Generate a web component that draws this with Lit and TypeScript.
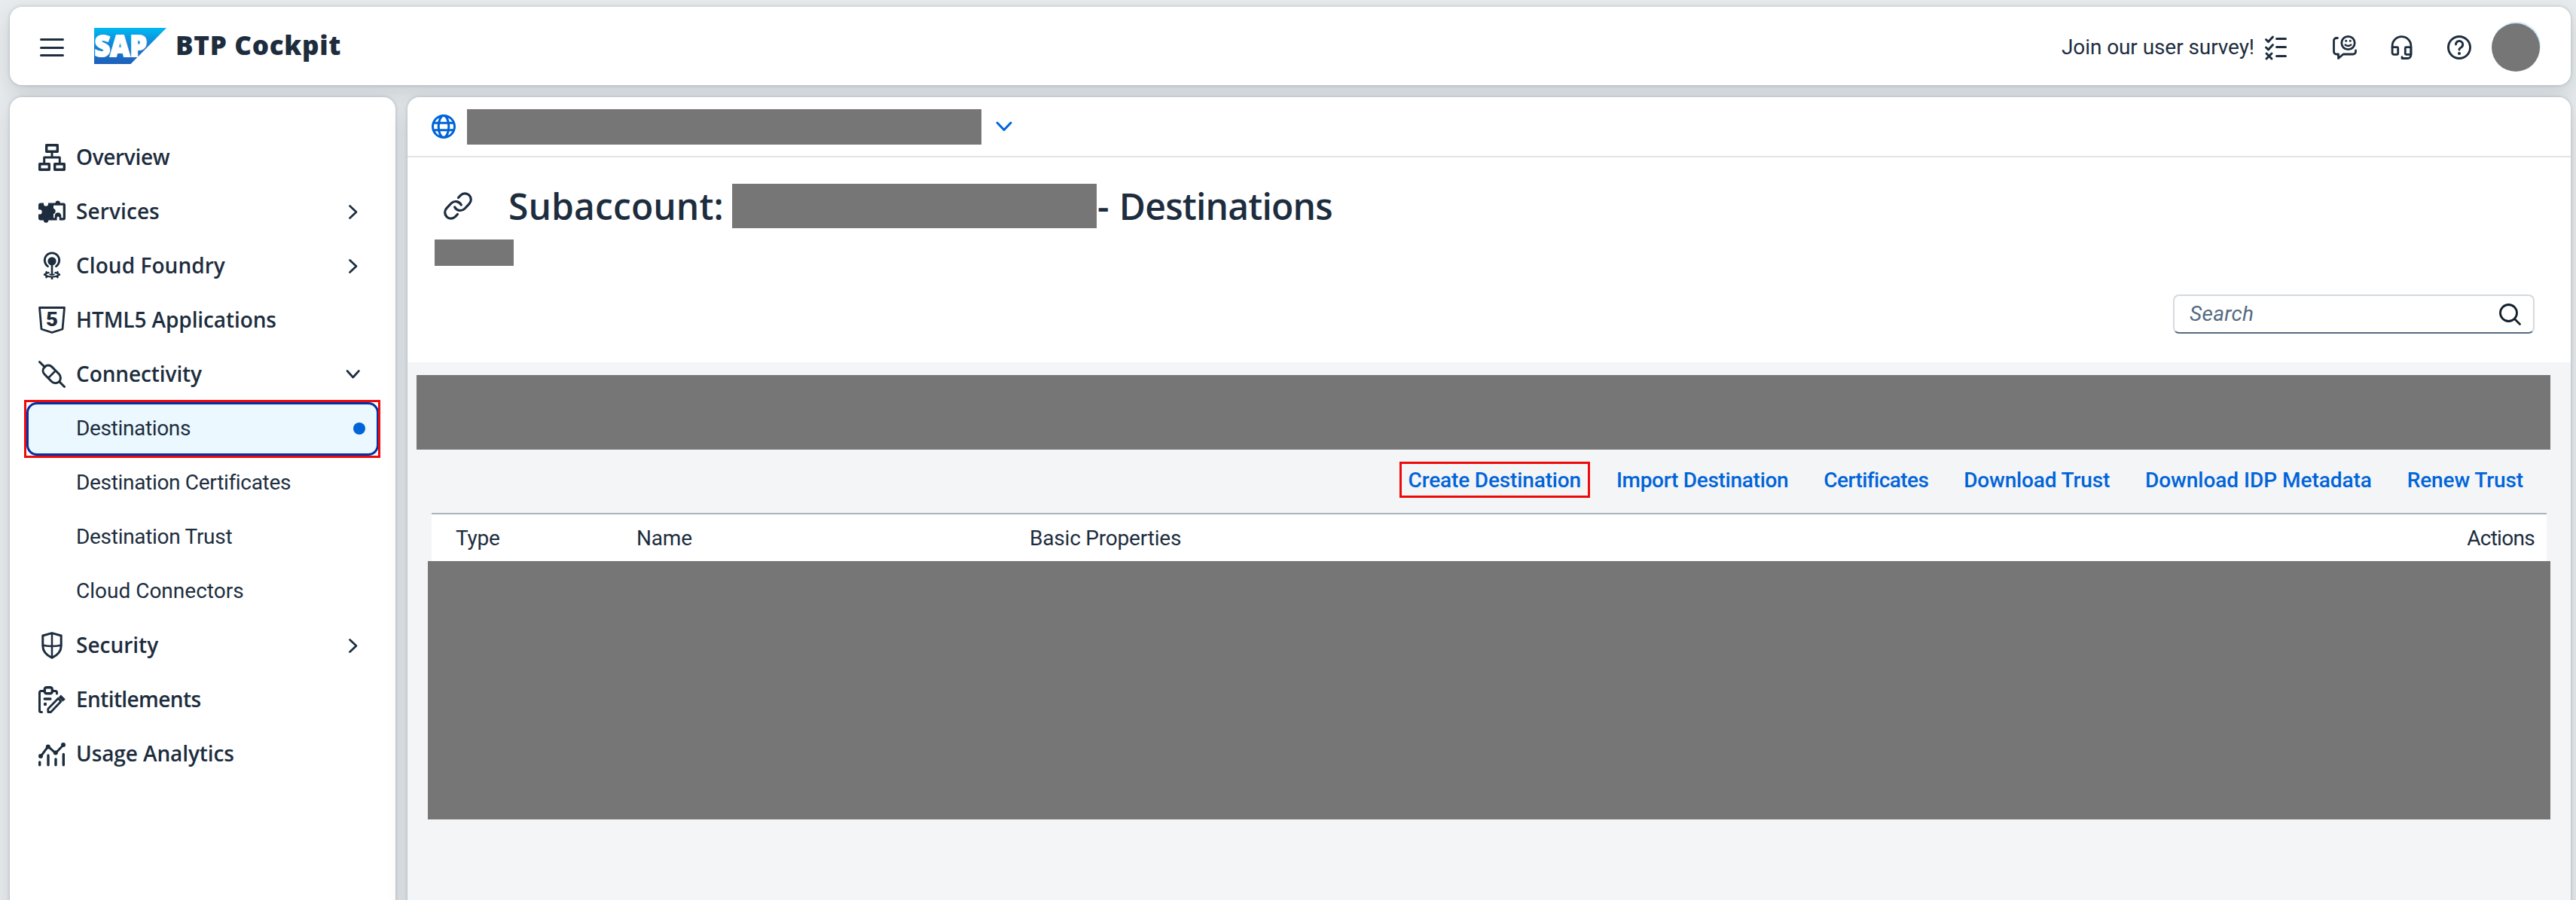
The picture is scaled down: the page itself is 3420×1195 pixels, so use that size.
import { LitElement, html, svg, css, nothing } from "lit";
import { customElement } from "lit/decorators.js";
import { classMap } from "lit/directives/class-map.js";
import { styleMap } from "lit/directives/style-map.js";

type NavItem = {
  label: string;
  icon?: keyof typeof navIcons;
  arrow?: "right" | "down";
  selected?: boolean;
  tracking: number;
};

/* Navigation icons, each on a 36x36 grid. */
const navIcons = {
  org: svg`
    <g fill="none" stroke="currentColor" stroke-width="3.4" stroke-linejoin="round">
      <rect x="10.7" y="1.7" width="14.6" height="8.6"/>
      <rect x="1.7" y="26.7" width="12.6" height="7.6"/>
      <rect x="21.7" y="26.7" width="12.6" height="7.6"/>
      <path d="M18 10.5V18M7.7 26v-8h20.6v8" stroke-width="3"/>
    </g>`,
  puzzle: svg`
    <path fill="currentColor" d="M3 6.5H7v1.200a3 3 0 0 0 6 0V6.500H22.600a3.100 3.100 0 1 1 6.200 0H33a3 3 0 0 1 3 3V26.500a3 3 0 0 1-3 3H13.300a3.200 3.200 0 1 1-6.400 0H3a3 3 0 0 1-3-3V21.500H1.600a3.100 3.100 0 0 0 0-6.200H0V9.500a3 3 0 0 1 3-3z"/>
    <path fill="#fff" d="M20 9.800H32.700V26.200H30.300V23.500a4.300 4.300 0 0 0-8.600 0v2.700H20V21.300a4 4 0 0 0 0-7.600z"/>
    <path fill="#fff" d="M24.600 30V26a1.600 1.600 0 0 1 3.200 0v4z"/>`,
  foundry: svg`
    <g fill="none" stroke="currentColor" stroke-width="2.8">
      <path d="M12.500 18.600a9.700 9.700 0 1 1 11 0" stroke-linecap="round"/>
      <path d="M18 14V29" stroke-width="2.600"/>
      <path d="M14.500 26.900c-2.900.4-5 1.400-5 2.700 0 1.700 3.800 3 8.500 3s8.500-1.300 8.500-3c0-1.300-2.100-2.300-5-2.700" stroke-width="2.200"/>
      <path d="M14.500 29q3.500 1.800 7 0" stroke-width="1.800"/>
      <path d="M7 29.600h3M26 29.600h3M9.500 33.600l2.500-1.600M26.500 33.600l-2.500-1.600M18 33v3M9.500 26l2 1M26.500 26l-2 1" stroke-width="2.600"/>
    </g>
    <circle cx="18" cy="11.800" r="5.600" fill="currentColor"/>`,
  html5: svg`
    <path d="M1.500 1.500H34.500L32 30 18 34.500 4 30z" fill="none" stroke="currentColor" stroke-width="2.800" stroke-linejoin="round"/>
    <text x="10" y="26" textLength="16" lengthAdjust="spacingAndGlyphs" class="five">5</text>`,
  plug: svg`
    <g fill="none" stroke="currentColor" stroke-width="3" stroke-linecap="round" stroke-linejoin="round">
      <path d="M1.500 1.500 8.500 8.500M28 28l6.500 6.500"/>
      <path d="M8 8.500c2.800-3.400 7-3.200 9.700-.6l9.500 9.600c2.700 2.700 3 7.500.3 10.200s-7.400 2.500-10.100-.2l-9.300-9.500c-2.600-2.700-2.800-6.700-.1-9.500z"/>
      <path d="M21.500 14.500l-7.500 7.500" stroke-width="2.600"/>
    </g>`,
  shield: svg`
    <g fill="none" stroke="currentColor" stroke-width="3" stroke-linejoin="round">
      <path d="M18 1.600 30.200 5V18.500c0 7-4.700 12.400-12.200 15.900C10.500 30.900 5.800 25.500 5.800 18.500V5z"/>
      <path d="M18 2V34" stroke-width="2.500"/>
      <path d="M6 17.700q12 2.600 24 0" stroke-width="2.700"/>
    </g>`,
  clipboard: svg`
    <g fill="none" stroke="currentColor" stroke-width="3" stroke-linecap="round" stroke-linejoin="round">
      <path d="M4.500 34.500H3.500a2 2 0 0 1-2-2V8.500a2 2 0 0 1 2-2H8M18.500 6.500h4a2 2 0 0 1 2 2V10"/>
      <rect x="8.300" y="1.700" width="10" height="8" rx="2.500" stroke-width="3.400"/>
      <path d="M8.300 17h7.500" stroke-width="3.600"/>
      <path d="M12.800 34.500v-4.300L26.300 16.300l3.700 3.900L16.500 34.500z" stroke-width="2.800"/>
    </g>
    <circle cx="9" cy="24" r="2.200" fill="currentColor"/>
    <path d="M29.800 11.500l6 6-3.300 3-5.600-5.700z" fill="currentColor"/>`,
  chart: svg`
    <g fill="none" stroke="currentColor" stroke-width="3" stroke-linecap="round" stroke-linejoin="round">
      <path d="M3 21.500 12.800 8.200 22.800 17 33 6.200"/>
      <path d="M1.700 29v3.700M13 20v12.700M23 25v7.700M33.300 18.500v14.200" stroke-width="3.400"/>
    </g>
    <g fill="currentColor">
      <circle cx="3" cy="21" r="3"/><circle cx="12.800" cy="8.500" r="3"/>
      <circle cx="22.800" cy="16.500" r="3"/><circle cx="33" cy="6" r="3"/>
    </g>`,
};

const items: NavItem[] = [
  { label: "Overview", icon: "org", tracking: -0.35 },
  { label: "Services", icon: "puzzle", arrow: "right", tracking: 0.1 },
  { label: "Cloud Foundry", icon: "foundry", arrow: "right", tracking: 0.05 },
  { label: "HTML5 Applications", icon: "html5", tracking: -0.1 },
  { label: "Connectivity", icon: "plug", arrow: "down", tracking: -0.1 },
  { label: "Destinations", selected: true, tracking: -0.35 },
  { label: "Destination Certificates", tracking: -0.32 },
  { label: "Destination Trust", tracking: -0.3 },
  { label: "Cloud Connectors", tracking: 0 },
  { label: "Security", icon: "shield", arrow: "right", tracking: 0 },
  { label: "Entitlements", icon: "clipboard", tracking: -0.6 },
  { label: "Usage Analytics", icon: "chart", tracking: -0.1 },
];

const actions = [
  { label: "Create Destination", tracking: -0.14, marked: true },
  { label: "Import Destination", tracking: -0.28 },
  { label: "Certificates", tracking: -0.55 },
  { label: "Download Trust", tracking: -0.15 },
  { label: "Download IDP Metadata", tracking: -0.03 },
  { label: "Renew Trust", tracking: -0.12 },
];

@customElement("side-nav")
class SideNav extends LitElement {
  static styles = css`
    :host { display: block; padding-top: 44px; color: #1d2d3e; }
    .row {
      box-sizing: border-box; position: relative; display: flex; align-items: center;
      height: 72px; margin: 0 22px; padding: 0 17px 0 16px;
    }
    .icon { width: 36px; height: 36px; margin-right: 14px; flex: none; overflow: visible; }
    .icon.empty { visibility: hidden; }
    .label { flex: 1; padding-bottom: 2px; font-size: 28px; line-height: 40px; font-weight: 600; white-space: nowrap; }
    .sub .label { font-family: Roboto, sans-serif; font-weight: 400; padding-bottom: 0; }
    .arrow { width: 36px; height: 36px; flex: none; }
    .five { font: 900 26px Roboto, sans-serif; fill: currentColor; }
    .selected::before {
      content: ""; position: absolute; inset: 1px 0 0 0; box-sizing: border-box;
      border: 3px solid #0032a5; border-radius: 14px; background: #ebf8ff;
    }
    .selected::after {
      content: ""; position: absolute; inset: -2px -2px -3px -3px; border: 3px solid #ee0a0a;
    }
    .selected > * { position: relative; }
    .dot { width: 16px; height: 16px; margin-right: 1px; border-radius: 50%; background: #0064d9; }
  `;
  render() {
    return items.map(
      (i) => html`<div class=${classMap({ row: true, sub: !i.icon, selected: !!i.selected })}>
        <svg class=${classMap({ icon: true, empty: !i.icon })} viewBox="0 0 36 36">${i.icon ? navIcons[i.icon] : nothing}</svg>
        <span class="label" style=${styleMap({ letterSpacing: i.tracking + "px" })}>${i.label}</span>
        ${i.arrow
          ? html`<svg class="arrow" viewBox="0 0 36 36"><path fill="none" stroke="currentColor" stroke-width="2.700" stroke-linecap="round" stroke-linejoin="round"
              d=${i.arrow === "right" ? "M14.500 10.500l8.500 8-8.500 8" : "M11 13.500l7.700 8.500 7.700-8.500"}/></svg>`
          : nothing}
        ${i.selected ? html`<span class="dot"></span>` : nothing}
      </div>`
    );
  }
}

@customElement("shell-bar")
class ShellBar extends LitElement {
  static styles = css`
    :host { display: flex; align-items: center; color: #1d2d3e; padding: 0 41px 0 38px; box-sizing: border-box; }
    svg { flex: none; overflow: visible; }
    .menu { margin-right: 37px; }
    .logo { margin-right: 11px; }
    .sap { font: 800 38px "Open Sans", sans-serif; fill: #fff; stroke: #fff; stroke-width: 2; }
    .title { flex: 1; padding-bottom: 3px; font-size: 35px; line-height: 48px; font-weight: 800; letter-spacing: 0.7px; }
    .survey { font-family: Roboto, sans-serif; font-size: 28px; line-height: 40px; letter-spacing: -0.08px; padding-top: 4px; margin-right: 13px; white-space: nowrap; }
    .i1, .i2, .i3, .i4 { margin-top: 4px; }
    .i1 { margin-right: 59px; }
    .i2 { margin-right: 43.500px; }
    .i3 { margin-right: 44.500px; }
    .i4 { margin-right: 27px; }
    .avatar { width: 64px; height: 64px; margin-top: 4px; border-radius: 50%; background: #767676; box-shadow: 1px -2px 0 #cfeafc; }
  `;
  render() {
    return html`
      <svg class="menu" width="36" height="36" viewBox="0 0 36 36"><path d="M3.500 9.500h29M3.500 20.500h29M3.500 30.500h29" stroke="currentColor" stroke-width="3" stroke-linecap="round"/></svg>
      <svg class="logo" width="98" height="48" viewBox="0 0 98 48">
        <defs><linearGradient id="g" x1="0" y1="0" x2="0" y2="1"><stop offset="0" stop-color="#00b9f2"/><stop offset=".45" stop-color="#1186d6"/><stop offset="1" stop-color="#1e5fbb"/></linearGradient></defs>
        <path d="M1 0H97L49.500 48H1z" fill="url(#g)"/>
        <text class="sap" x="1.500" y="38" textLength="69.500" lengthAdjust="spacingAndGlyphs">SAP</text>
      </svg>
      <span class="title">BTP Cockpit</span>
      <span class="survey">Join our user survey!</span>
      <svg class="i1" width="32" height="32" viewBox="0 0 32 32"><g fill="none" stroke="currentColor" stroke-width="3" stroke-linecap="round" stroke-linejoin="round">
        <path d="M16.500 4.500h12M16.500 15.500h12M16.500 27.500h12"/><path d="M2.500 5.500l3 3 6-6.500M2.500 16l3 3 6-6.500M3 24l7 7M10 24l-7 7"/></g></svg>
      <svg class="i2" width="32" height="32" viewBox="0 0 32 32"><g fill="none" stroke="currentColor" stroke-width="2.800" stroke-linecap="round" stroke-linejoin="round">
        <path d="M6.500 3.500H5a3.500 3.500 0 0 0-3.500 3.500V21.500A3.500 3.500 0 0 0 5 25H7.500v5.500L14 25H27a3.500 3.500 0 0 0 3.500-3.500V20"/>
        <circle cx="20.500" cy="10" r="8.700"/><path d="M16.700 12.500q3.800 3 7.600 0" stroke-width="2.500"/></g>
        <circle cx="17.700" cy="7.300" r="1.500" fill="currentColor"/><circle cx="23.300" cy="7.300" r="1.500" fill="currentColor"/></svg>
      <svg class="i3" width="32" height="32" viewBox="0 0 32 32"><g transform="translate(1.500 0)" fill="none" stroke="currentColor" stroke-width="2.800" stroke-linecap="round" stroke-linejoin="round">
        <path d="M1.600 16V14a12.400 12.400 0 0 1 24.800 0v12a4.500 4.500 0 0 1-4.500 4.500H14.500v-1.800"/>
        <path d="M1.600 15.700H8.200a1 1 0 0 1 1 1v7.600a1 1 0 0 1-1 1H3.600a2 2 0 0 1-2-2zM26.400 15.700H19.800a1 1 0 0 0-1 1v7.600a1 1 0 0 0 1 1H26.400z"/></g></svg>
      <svg class="i4" width="32" height="32" viewBox="0 0 32 32"><g fill="none" stroke="currentColor" stroke-width="2.900" stroke-linecap="round" stroke-linejoin="round">
        <circle cx="16" cy="16" r="14.500"/><path d="M11.500 12a4.600 4.600 0 1 1 7.200 3.800C17 16.800 16 17.500 16 19"/></g>
        <circle cx="16" cy="24" r="2.100" fill="currentColor"/></svg>
      <span class="avatar"></span>
    `;
  }
}

@customElement("app-root")
class AppRoot extends LitElement {
  static styles = css`
    :host {
      display: flex; flex-direction: column; gap: 16px; box-sizing: border-box;
      height: 1195px; padding: 9px 7px 0 13px; overflow: hidden;
      background: #e8ebed; font-family: "Open Sans", "Noto Sans", sans-serif; color: #1d2d3e;
    }
    .card { background: #fff; border-radius: 16px; box-shadow: 0 0 4px rgba(34, 53, 72, .24), 0 12px 28px rgba(34, 53, 72, .16); }
    shell-bar { height: 104px; flex: none; }
    .body { flex: 1; display: flex; gap: 16px; min-height: 0; }
    side-nav, .main { height: 1100px; }
    side-nav { width: 512px; flex: none; }
    .main { flex: 1; overflow: hidden; background: #f4f5f7; display: flex; flex-direction: column; min-width: 0; }
    .mask { background: #767676; flex: none; }
    .crumbs { display: flex; align-items: center; height: 78px; padding-left: 31px; background: #fff; border-bottom: 2px solid #e3e4e5; flex: none; }
    .m-crumb { width: 683px; height: 47px; margin: 0 19px 0 14px; }
    .crumbs svg { color: #0064d9; flex: none; }
    .top { background: #fff; height: 272px; flex: none; display: flex; flex-direction: column; }
    .head { display: flex; align-items: center; padding: 35px 0 0 46px; height: 59px; flex: none; }
    .head h1 { margin: 0; font-size: 48px; line-height: 60px; font-weight: 600; white-space: nowrap; }
    .head svg { flex: none; margin-right: 48px; }
    .h1a { width: 297px; letter-spacing: .1px; }
    .h1b { padding-left: 1px; letter-spacing: -.78px; word-spacing: 2.500px; }
    .m-head { width: 484px; height: 59px; }
    .m-small { width: 105px; height: 35px; margin: 15px 0 0 36px; }
    .search {
      box-sizing: border-box; align-self: flex-end; display: flex; align-items: center; justify-content: space-between;
      width: 480px; height: 52px; margin: 38px 48px 0 0; padding: 0 15px 0 20px;
      border: 2px solid #d5dadf; border-bottom-color: #556b82; border-radius: 8px;
    }
    .ph { font-family: Roboto, sans-serif; font-size: 28px; line-height: 40px; font-style: italic; color: #556b82; letter-spacing: .3px; }
    .search svg { color: #131e29; margin-top: 1px; }
    .banner { height: 99px; margin: 17px 27px 0 12px; }
    .tools { display: flex; justify-content: flex-end; align-items: center; gap: 46.800px; height: 48px; padding: 16px 63px 20px 0; flex: none; }
    .link { position: relative; padding-top: 2px; font-family: Roboto, sans-serif; font-size: 28px; line-height: 40px; font-weight: 500; color: #0064d9; white-space: nowrap; }
    .marked::after { content: ""; position: absolute; inset: -3px -12px; border: 3px solid #ee0a0a; }
    .thead {
      display: grid; grid-template-columns: 240px 522px 1fr auto; align-items: center; box-sizing: border-box; flex: none;
      height: 64px; margin: 0 32px; padding: 2px 16px 0 32px; border-top: 2px solid #a9b4be; background: #fff;
      font-family: Roboto, sans-serif; font-size: 28px; line-height: 40px; letter-spacing: -.2px;
    }
    .last { letter-spacing: -.7px; }
    .rows { height: 343px; margin: 0 27px 0 27px; }
  `;
  render() {
    return html`
      <shell-bar class="card"></shell-bar>
      <div class="body">
        <side-nav class="card"></side-nav>
        <main class="main card">
          <div class="crumbs">
            <svg width="34" height="34" viewBox="0 0 34 34"><g fill="none" stroke="currentColor" stroke-width="3"><circle cx="17" cy="17" r="14.500"/><ellipse cx="17" cy="17" rx="6.800" ry="14.500"/><path d="M3.500 12.300h27M3.500 21.700h27"/></g></svg>
            <span class="mask m-crumb"></span>
            <svg width="22" height="16" viewBox="0 0 22 16"><path d="M2 3l9 9.500L20 3" fill="none" stroke="currentColor" stroke-width="3" stroke-linecap="round" stroke-linejoin="round"/></svg>
          </div>
          <div class="top">
            <div class="head">
              <svg width="40" height="37" viewBox="-2 0 40 37"><g fill="none" stroke="currentColor" stroke-width="3.200" stroke-linecap="round">
                <path d="M19.500 7.500L22.500 4.300a8 8 0 0 1 11.500 11.300L28 22a8.300 8.300 0 0 1-13.300-2"/>
                <path d="M18.500 29.500L15.500 32.700a8 8 0 0 1-11.500-11.300L10 15a8.300 8.300 0 0 1 13.300 2"/></g></svg>
              <h1 class="h1a">Subaccount:</h1>
              <span class="mask m-head"></span>
              <h1 class="h1b">- Destinations</h1>
            </div>
            <span class="mask m-small"></span>
            <div class="search">
              <span class="ph">Search</span>
              <svg width="30" height="30" viewBox="0 0 30 30"><g fill="none" stroke="currentColor" stroke-width="2.800" stroke-linecap="round"><circle cx="12.500" cy="12.500" r="11"/><path d="M20.500 20.500l7 7"/></g></svg>
            </div>
          </div>
          <div class="mask banner"></div>
          <div class="tools">
            ${actions.map((a) => html`<span class=${classMap({ link: true, marked: !!a.marked })} style=${styleMap({ letterSpacing: a.tracking + "px" })}>${a.label}</span>`)}
          </div>
          <div class="thead"><span>Type</span><span>Name</span><span>Basic Properties</span><span class="last">Actions</span></div>
          <div class="mask rows"></div>
        </main>
      </div>
    `;
  }
}
